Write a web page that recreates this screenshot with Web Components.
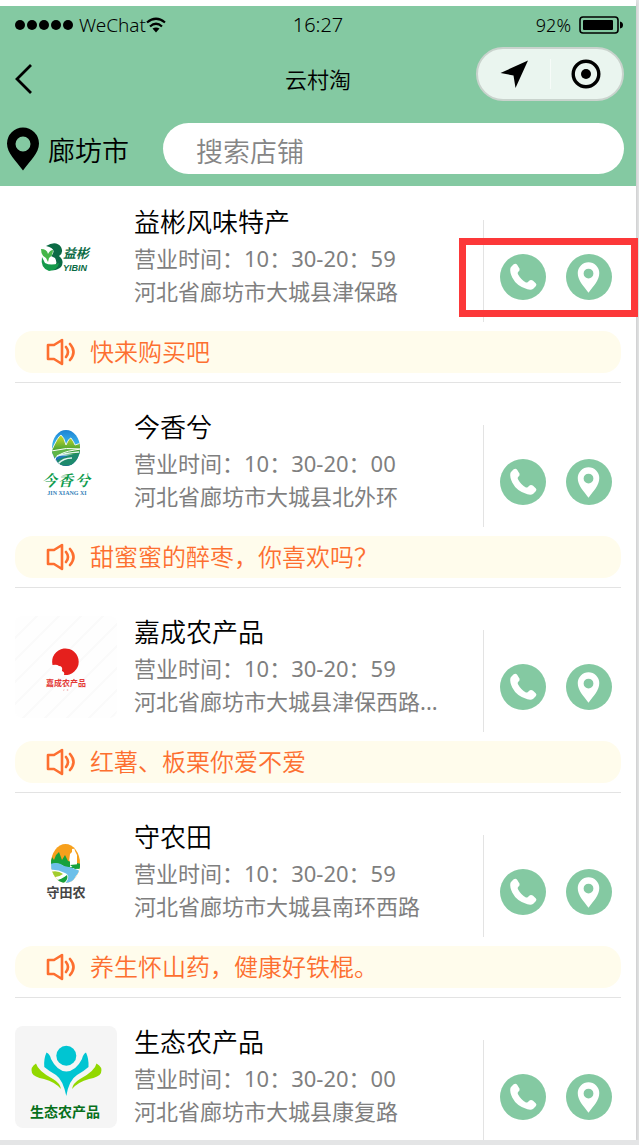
<!DOCTYPE html>
<html lang="zh-CN">
<head>
<meta charset="utf-8">
<meta name="viewport" content="width=device-width, initial-scale=1">
<title>云村淘</title>
<style>
  body { margin: 0; background: #e4e5e6; font-family: "Noto Sans", "Noto Sans CJK SC", sans-serif; }
</style>
</head>
<body>
<app-screen>
  <status-bar slot="header" carrier="WeChat" time="16:27" battery="92%"></status-bar>
  <nav-bar slot="header">云村淘</nav-bar>
  <search-row slot="header" placeholder="搜索店铺">廊坊市</search-row>

  <shop-card>
    <svg slot="logo" viewBox="0 0 102 102" aria-hidden="true">
      <path d="M31 40 Q41 34 46 41 Q49 47 44 50 Q50 55 46 61 Q41 66 32 63 Q45 61 40 52 L36 50 Q43 43 31 40Z" fill="#0b6b45"/>
      <path d="M26 43 Q32 43 33 48 Q35 44 38 44 Q38 50 34 52 L33 56 L31 52 Q26 50 26 43Z" fill="#45b649"/>
      <path d="M27 51 Q25 62 34 65 Q43 64 44 57 Q36 60 30 57Z" fill="#159a4b"/>
      <text x="48" y="52" font-size="13" font-weight="700" font-style="italic" font-family="Noto Sans CJK SC, sans-serif" fill="#0b6b45">益彬</text>
      <text x="48" y="65" font-size="9" font-weight="700" font-style="italic" font-family="Liberation Sans, sans-serif" fill="#0b6b45">YIBIN</text>
    </svg>
    <span slot="name">益彬风味特产</span>
    <span slot="hours">营业时间：10：30-20：59</span>
    <span slot="address">河北省廊坊市大城县津保路</span>
    <span slot="notice">快来购买吧</span>
    <attention-frame slot="mark"></attention-frame>
  </shop-card>

  <shop-card>
    <svg slot="logo" viewBox="0 0 102 102" aria-hidden="true">
      <defs>
        <linearGradient id="sky" x2="0" y2="1"><stop stop-color="#1c7fd0"/><stop offset=".4" stop-color="#39b5ee"/><stop offset="1" stop-color="#0c4b9b"/></linearGradient>
        <linearGradient id="hill" x2="0" y2="1"><stop stop-color="#d5de25"/><stop offset="1" stop-color="#188f3b"/></linearGradient>
        <clipPath id="oval"><ellipse cx="51" cy="37" rx="14" ry="18"/></clipPath>
      </defs>
      <g clip-path="url(#oval)">
        <path d="M36 18h30v38H36z" fill="url(#sky)"/>
        <path d="M36 41 Q43 25 46 24 Q49 26 51 34 Q54 27 56 27 Q59 31 60 34 L66 32 V44 H36Z" fill="url(#hill)" stroke="#e8f4ed"/>
        <path d="M36 40 Q52 36 66 38 Q51 40 46 43 Q37 47 42 51" fill="#5fb548" stroke="#fff" stroke-width="1"/>
        <path d="M42 49 Q55 43 66 42 L62 53 Q51 56 43 54Z" fill="#1d8a6c"/>
        <path d="M42 45 Q50 42 64 41 M43 53 Q48 47 57 47" fill="none" stroke="#e4f4ef" stroke-width="1.500"/>
      </g>
      <g font-size="15" font-weight="700" fill="#0e9b4b" font-style="italic" font-family="Noto Serif CJK SC, Noto Sans CJK SC, serif">
        <text x="27" y="75">今</text><text x="43" y="75">香</text><text x="60" y="75">兮</text>
      </g>
      <text x="52" y="84" text-anchor="middle" font-size="6" font-weight="700" font-family="Liberation Serif, serif" fill="#3480b8">JIN XIANG XI</text>
    </svg>
    <span slot="name">今香兮</span>
    <span slot="hours">营业时间：10：30-20：00</span>
    <span slot="address">河北省廊坊市大城县北外环</span>
    <span slot="notice">甜蜜蜜的醉枣，你喜欢吗？</span>
  </shop-card>

  <shop-card>
    <svg slot="logo" viewBox="0 0 102 102" aria-hidden="true">
      <defs><pattern id="rain" width="22" height="22" patternUnits="userSpaceOnUse"><path d="M-2 24 24 -2 M-2 2 2 -2 M20 24 24 20" stroke="#fafafa" stroke-width="2"/></pattern></defs>
      <rect width="102" height="102" rx="8" fill="#fefefe"/>
      <rect width="102" height="102" rx="8" fill="url(#rain)"/>
      <path d="M37.500 49 A13.300 13.300 0 1 1 49 59 Q50 56 47 55 Q48 50 44 50 Q42 48 37.500 49Z" fill="#e5201d"/>
      <text x="51" y="70" text-anchor="middle" font-size="8" font-weight="700" fill="#e33a38">嘉成农产品</text>
      <path d="M49 73v1.500h-1M52 73l1 2m0-2-1 2" fill="none" stroke="#efa5a4" stroke-width=".5"/>
    </svg>
    <span slot="name">嘉成农产品</span>
    <span slot="hours">营业时间：10：30-20：59</span>
    <span slot="address">河北省廊坊市大城县津保西路...</span>
    <span slot="notice">红薯、板栗你爱不爱</span>
  </shop-card>

  <shop-card>
    <svg slot="logo" viewBox="0 0 102 102" aria-hidden="true">
      <defs><clipPath id="egg"><ellipse cx="50.500" cy="42.500" rx="14.500" ry="19.500"/></clipPath></defs>
      <g clip-path="url(#egg)">
        <path d="M35 22h32v42H35z" fill="#f7a01c"/>
        <path d="M35 42 L37 36 L39 39 L41 34 L44 31 L47 39 L50 34 L53 40 L66 43 V48 H35Z" fill="#17a13b"/>
        <path d="M57 28 q3-1 3 2 l2 4 v12 h-7 v-7 l-1 2 1-8 2-2Z" fill="#fff"/>
        <path d="M35 44 Q43 40 50 46 L66 48 V64 H35Z" fill="#fff"/>
        <path d="M35 43 Q43 40 49 45 Q57 46 65 50 Q60 55 56 64 H49 Q57 55 50 52 Q42 48 35 49Z" fill="#6dbfe9"/>
        <path d="M35 51 Q43 49 48 53 Q43 57 37 56Z" fill="#a2cc2c"/>
        <path d="M41 59 Q46 59 52 54 Q54 59 47 63Z" fill="#17a13b"/>
        <path d="M55 44 L66 43 V47 L60 48Z" fill="#17a13b"/>
      </g>
      <text x="51" y="76" text-anchor="middle" font-size="13" font-weight="700" fill="#454545">守田农</text>
    </svg>
    <span slot="name">守农田</span>
    <span slot="hours">营业时间：10：30-20：59</span>
    <span slot="address">河北省廊坊市大城县南环西路</span>
    <span slot="notice">养生怀山药，健康好铁棍。</span>
  </shop-card>

  <shop-card>
    <svg slot="logo" viewBox="0 0 102 102" aria-hidden="true">
      <rect width="102" height="102" rx="8" fill="#f5f5f5"/>
      <path d="M29.300 41 Q28.500 33 31.500 26.500 Q35 28 36 33 Q42 45 51.300 45.500 Q61 45 67 33 Q68 28 71 26.500 Q74 33 73.500 41 Q69 45 62 49 Q54 54 51.300 70 Q48 54 41 49 Q34 45 29.300 41Z" fill="#00c5d2"/>
      <circle cx="51.300" cy="29.700" r="12" fill="#f5f5f5"/>
      <circle cx="51.300" cy="29.700" r="10" fill="#00c5d2"/>
      <path d="M21 37.500 Q15 41 17 47 Q19 51 29 53 Q40 56 46 63 Q45 57 38 53 Q23 45 21 37.500Z M81.500 37.500 Q88 41 86 47 Q84 51 74 53 Q63 56 57 63 Q58 57 65 53 Q80 45 81.500 37.500Z" fill="#92d800"/>
      <text x="50" y="91" text-anchor="middle" font-size="14" font-weight="700" fill="#07701b">生态农产品</text>
    </svg>
    <span slot="name">生态农产品</span>
    <span slot="hours">营业时间：10：30-20：00</span>
    <span slot="address">河北省廊坊市大城县康复路</span>
  </shop-card>
</app-screen>

<script>
  const define = (name, markup, setup) => {
    const template = document.createElement('template');
    template.innerHTML = markup;
    customElements.define(name, class extends HTMLElement {
      constructor() {
        super();
        this.attachShadow({ mode: 'open' }).append(template.content.cloneNode(true));
      }
      connectedCallback() { if (setup) setup(this, this.shadowRoot); }
    });
  };

  define('app-screen', `
    <style>
      :host { display: flex; flex-direction: column; box-sizing: border-box; height: calc(100vh - 5px);
        margin-right: 3px; padding-top: 6px; background: #fff; box-shadow: 0 2px 4px #bbb; }
      header { flex: none; background: #84c9a2; }
      main { flex: 1; min-height: 0; overflow-x: visible; overflow-y: clip; display: flex; flex-direction: column;
        gap: 8px; }
    </style>
    <header><slot name="header"></slot></header>
    <main><slot></slot></main>`);

  define('status-bar', `
    <style>
      :host { display: grid; grid-template-columns: 1fr auto 1fr; align-items: center; height: 38px;
        padding: 0 12px; line-height: 24px; font-weight: 350; }
      .left, .right { display: flex; align-items: center; }
      .left { font-size: 19px; padding-left: 3px; }
      .dots { margin-right: 5px; }
      .time { font-size: 20px; }
      .right { justify-content: flex-end; gap: 8px; font-size: 18px; }
    </style>
    <div class="left">
      <svg class="dots" width="59" height="10"><circle cx="5" cy="5" r="5"/><circle cx="17" cy="5" r="5"/><circle cx="29" cy="5" r="5"/><circle cx="41" cy="5" r="5"/><circle cx="53" cy="5" r="5"/></svg>
      <span class="carrier"></span>
      <svg width="20" height="16" viewBox="0 0 20 16" fill="none" stroke="#000" stroke-width="2.200"><path d="M1 5.500Q10-2 19 5.500M4 9.500Q10 4 16 9.500"/><path d="M6.500 11.500Q10 9.500 13.500 11.500L10 15.500Z" fill="#000" stroke="none"/></svg>
    </div>
    <span class="time"></span>
    <div class="right"><span class="battery"></span>
      <svg width="45" height="18" viewBox="0 0 45 18"><rect x="1" y="1" width="38" height="16" rx="3" fill="none" stroke="#000" stroke-width="1.600"/><rect x="4" y="4" width="30" height="10" rx="1"/><path d="M41 5.500Q44 6 44 9T41 12.500Z"/></svg>
    </div>`,
    (host, root) => {
      for (const key of ['carrier', 'time', 'battery']) root.querySelector('.' + key).textContent = host.getAttribute(key);
    });

  define('nav-bar', `
    <style>
      :host { display: grid; grid-template-columns: 1fr auto 1fr; align-items: center; height: 70px; padding: 0 12px; }
      button { border: 0; padding: 0; background: none; display: grid; place-items: center; }
      .back { justify-self: start; padding-left: 3px; }
      h1 { margin: 0; font-size: 22px; line-height: 30px; font-weight: 350; }
      .capsule { justify-self: end; align-self: start; margin-top: 3px; box-sizing: border-box; width: 148px; height: 54px;
        display: grid; grid-template-columns: 1fr 1px 1fr; align-items: center; border: 2px solid #c9d3cd; border-radius: 27px; background: #eaf5ef; }
      .capsule i { height: 30px; background: #f6fbf8; }
      .capsule button { height: 50px; }
    </style>
    <button class="back" aria-label="返回"><svg width="18" height="32" viewBox="0 0 18 32"><path d="M16 2 2 16 16 30" fill="none" stroke="#000" stroke-width="2.800"/></svg></button>
    <h1><slot></slot></h1>
    <div class="capsule">
      <button aria-label="导航"><svg width="28" height="28" viewBox="0 0 28 28"><path d="M28 0.500 15.500 28 13.500 15.500 0.500 13Z"/></svg></button><i></i>
      <button aria-label="关闭"><svg width="30" height="30" viewBox="0 0 30 30"><circle cx="15" cy="15" r="12.800" fill="none" stroke="#000" stroke-width="3.400"/><circle cx="15" cy="15" r="5"/></svg></button>
    </div>`);

  define('search-row', `
    <style>
      :host { display: flex; align-items: center; padding: 9px 12px 12px 7px; }
      .city { width: 156px; flex: none; border: 0; padding: 0; background: none; color: #000; display: flex; align-items: center; gap: 9px;
        font: 350 27px/36px "Noto Sans", "Noto Sans CJK SC", sans-serif; }
      .city span { padding-top: 5px; }
      input { flex: 1; min-width: 0; box-sizing: border-box; height: 51px; border: 0; outline: 0; border-radius: 26px; padding: 5px 33px 0;
        background: #fff; font: 350 27px/36px "Noto Sans", "Noto Sans CJK SC", sans-serif; }
      input::placeholder { color: #858585; opacity: 1; }
    </style>
    <button class="city"><svg width="32" height="44" viewBox="0 0 32 44"><path fill-rule="evenodd" d="M16 0.500A16 16 0 0 0 0 16.500C0 26 9 34 16 43.500C23 34 32 26 32 16.500A16 16 0 0 0 16 0.500ZM16 9.500a7.500 7.500 0 1 1 0 15a7.500 7.500 0 0 1 0-15Z"/></svg><span><slot></slot></span></button>
    <input type="text">`,
    (host, root) => {
      const input = root.querySelector('input');
      input.placeholder = host.getAttribute('placeholder');
      input.setAttribute('aria-label', input.placeholder);
    });

  define('attention-frame', `
    <style>
      :host { position: absolute; left: -25px; right: -17px; top: 18px; height: 79px; box-sizing: border-box;
        border: 7px solid #fc3839; pointer-events: none; }
    </style>`);

  define('shop-card', `
    <style>
      :host { display: block; flex: none; margin: 0 15px; padding: 20px 0 9px; border-bottom: 1px solid #e3e3e3; }
      .body { display: grid; grid-template-columns: 102px minmax(0, 1fr) 138px; }
      ::slotted(svg) { display: block; width: 102px; height: 102px; }
      .info { padding-left: 17px; white-space: nowrap; }
      h2, p { margin: 0; font-weight: 350; }
      h2 { font-size: 26px; line-height: 32px; padding-bottom: 4px; color: #000; }
      .info p { font-size: 22px; line-height: 33px; color: #7f7f7f; font-weight: 400; }
      .actions { position: relative; display: flex; gap: 20px; box-sizing: border-box; margin-top: 14px; height: 102px;
        padding: 34px 0 0 16px; border-left: 1px solid #e3e3e3; }
      button { width: 46px; height: 46px; flex: none; padding: 0; border: 0; border-radius: 50%; background: #84c9a2; }
      button svg { display: block; width: 46px; height: 46px; }
      .notice { display: flex; align-items: center; gap: 14px; height: 42px; margin-top: 9px; padding-left: 31px;
        border-radius: 18px; background: #fffcec; color: #fd6f30; font-size: 24px; line-height: 32px; }
    </style>
    <div class="body">
      <slot name="logo"></slot>
      <div class="info">
        <h2><slot name="name"></slot></h2>
        <p><slot name="hours"></slot></p>
        <p><slot name="address"></slot></p>
      </div>
      <div class="actions">
        <button aria-label="电话"><svg viewBox="0 0 47 47"><path d="M11 13.500 L14 10.500 Q16 9 17.500 11 L20 15 Q20.500 17 18.500 18.500 Q17.500 19.500 18.500 21 Q21.500 26.500 26.500 29 Q27.500 29.500 28.500 28.500 L30.500 26.800 Q32 26 33.500 27 L36.500 30 Q38 31.500 36.500 33 L34 35.500 Q32 37 28 36 Q17 33 12.500 24 Q10 18.500 10.500 15Z" fill="#fff"/></svg></button>
        <button aria-label="位置"><svg viewBox="0 0 47 47"><path fill-rule="evenodd" d="M23 8.500A11 11 0 0 0 12 19.500C12 27 18 33 23 39.500C28 33 34 27 34 19.500A11 11 0 0 0 23 8.500ZM23 15a5 5 0 1 1 0 10a5 5 0 0 1 0-10Z" fill="#fff"/></svg></button>
        <slot name="mark"></slot>
      </div>
    </div>
    <p class="notice"><svg width="30" height="28" viewBox="0 0 30 28" fill="none" stroke="#fd6f30" stroke-width="2.600" stroke-linejoin="round" stroke-linecap="round"><path d="M2 7H8L16 2V26L8 21H2ZM20 9Q24 14 20 19M24 6Q31 14 24 22"/></svg><slot name="notice"></slot></p>`,
    (host, root) => {
      if (!host.querySelector('[slot=notice]')) root.querySelector('.notice').remove();
    });
</script>
</body>
</html>
